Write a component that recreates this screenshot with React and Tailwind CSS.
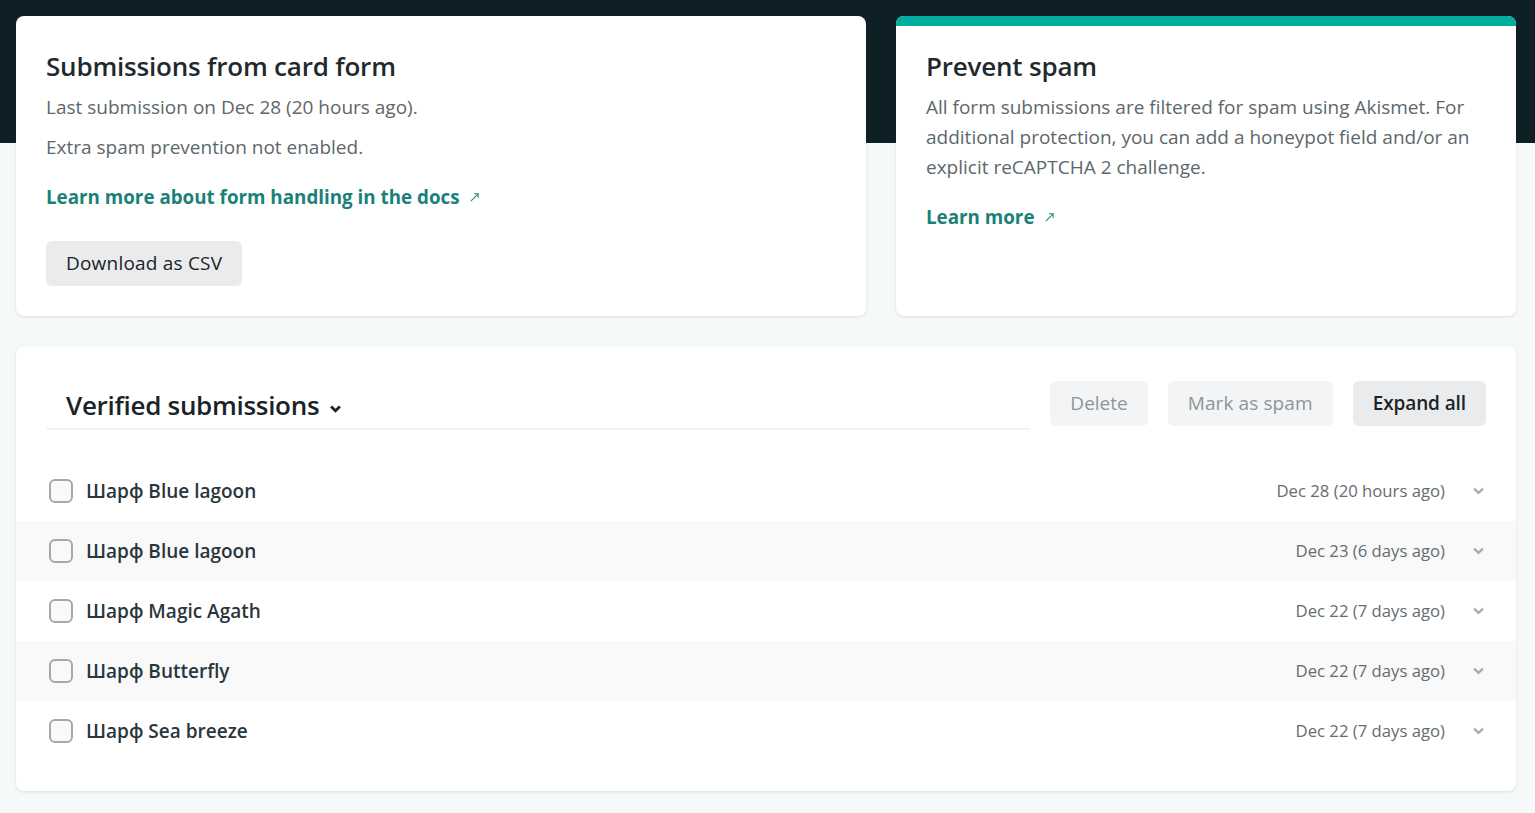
import React from "react";

const font = { fontFamily: '"Open Sans", "Noto Sans", sans-serif' };

function Chevron({ className, sw = 2.6 }) {
  return (
    <svg viewBox="0 0 12 8" className={className} fill="none" stroke="currentColor" strokeWidth={sw} strokeLinecap="butt" strokeLinejoin="miter">
      <path d="M1.2 1.4 L6 6 L10.8 1.4" />
    </svg>
  );
}

function Arrow() {
  return (
    <svg viewBox="0 0 12 12" className="w-[11px] h-[11px] ml-[9px] inline-block" fill="none" stroke="currentColor" strokeWidth="1.1">
      <path d="M2 10 L10 2 M5.5 2 H10 V6.5" />
    </svg>
  );
}

const rows = [
  { name: "Шарф Blue lagoon", date: "Dec 28 (20 hours ago)" },
  { name: "Шарф Blue lagoon", date: "Dec 23 (6 days ago)" },
  { name: "Шарф Magic Agath", date: "Dec 22 (7 days ago)" },
  { name: "Шарф Butterfly", date: "Dec 22 (7 days ago)" },
  { name: "Шарф Sea breeze", date: "Dec 22 (7 days ago)" },
];

export default function App() {
  return (
    <div className="min-h-[813px] w-full bg-[#f6f9fa] relative" style={font}>
      <div className="absolute top-0 left-0 right-0 h-[143px] bg-[#0f1f26]" />
      <div className="relative pt-[16px] pl-[16px] pr-[19px] flex flex-col gap-[30px]">
        <div className="flex gap-[30px]">
          <div className="w-[850px] h-[300px] bg-white rounded-[8px] shadow-[0_1px_3px_rgba(14,30,37,0.12)] px-[30px] pt-[30px]">
            <h2 className="text-[26px] leading-[40px] font-semibold text-[#1f2a2f] tracking-[-0.2px]">Submissions from card form</h2>
            <p className="text-[19px] leading-[40px] mt-[1px] text-[#5d676c]">Last submission on Dec 28 (20 hours ago).</p>
            <p className="text-[19px] leading-[40px] text-[#5d676c]">Extra spam prevention not enabled.</p>
            <a className="mt-[10px] flex items-center text-[18.8px] leading-[40px] font-bold text-[#1a8178]">
              Learn more about form handling in the docs <Arrow />
            </a>
            <button className="mt-[24px] h-[45px] px-[20px] rounded-[6px] bg-[#e9ebed] text-[19px] text-[#1c2326] tracking-[0.2px]">
              Download as CSV
            </button>
          </div>
          <div className="w-[620px] h-[300px] bg-white rounded-[8px] shadow-[0_1px_3px_rgba(14,30,37,0.12)] overflow-hidden flex flex-col">
            <div className="h-[10px] bg-[#00ad9f]" />
            <div className="px-[30px] pt-[20px]">
              <h2 className="text-[26px] leading-[40px] font-semibold text-[#1f2a2f] tracking-[-0.2px]">Prevent spam</h2>
              <p className="text-[19px] leading-[30px] mt-[6px] text-[#5d676c]">
                All form submissions are filtered for spam using Akismet. For additional protection, you can add a honeypot field and/or an explicit reCAPTCHA 2 challenge.
              </p>
              <a className="mt-[15px] flex items-center text-[18.8px] leading-[40px] font-bold text-[#1a8178]">
                Learn more <Arrow />
              </a>
            </div>
          </div>
        </div>

        <div className="w-[1500px] bg-white rounded-[8px] shadow-[0_1px_3px_rgba(14,30,37,0.12)] pt-[35px] pb-[30px]">
          <div className="flex items-start px-[30px]">
            <div className="flex-1 border-b-2 border-[#f1f3f4] h-[49px] pl-[20px] flex items-center">
              <span className="text-[26px] font-semibold text-[#1b2327] tracking-[-0.3px] mt-[2px]">Verified submissions</span>
              <Chevron className="w-[11px] h-[8px] ml-[11px] mt-[8px] text-[#1b2327]" sw={3} />
            </div>
            <div className="flex gap-[20px] ml-[20px]">
              <button className="h-[45px] px-[20px] rounded-[6px] bg-[#f3f4f5] text-[19px] text-[#8e9598]">Delete</button>
              <button className="h-[45px] px-[20px] rounded-[6px] bg-[#f3f4f5] text-[19px] text-[#8e9598] tracking-[0.1px]">Mark as spam</button>
              <button className="h-[45px] px-[20px] rounded-[6px] bg-[#e9ebed] text-[19px] text-[#1c2326] font-semibold tracking-[-0.1px]">Expand all</button>
            </div>
          </div>
          <div className="mt-[31px]">
            {rows.map((r, i) => (
              <div key={i} className={`h-[60px] flex items-center pl-[33px] pr-[30px] ${i % 2 === 1 ? "bg-[#f9f9f9]" : "bg-white"}`}>
                <span className="w-[24px] h-[24px] rounded-[6px] border-2 border-[#a8a8a8] bg-[#f8f9fa] shrink-0" />
                <span className="ml-[13px] text-[19px] font-semibold text-[#2a363b] tracking-[0px]">{r.name}</span>
                <span className="ml-auto text-[16.7px] text-[#656c70]">{r.date}</span>
                <Chevron className="w-[11px] h-[8px] ml-[28px] mr-[2px] text-[#a9abad]" />
              </div>
            ))}
          </div>
        </div>
      </div>
    </div>
  );
}
